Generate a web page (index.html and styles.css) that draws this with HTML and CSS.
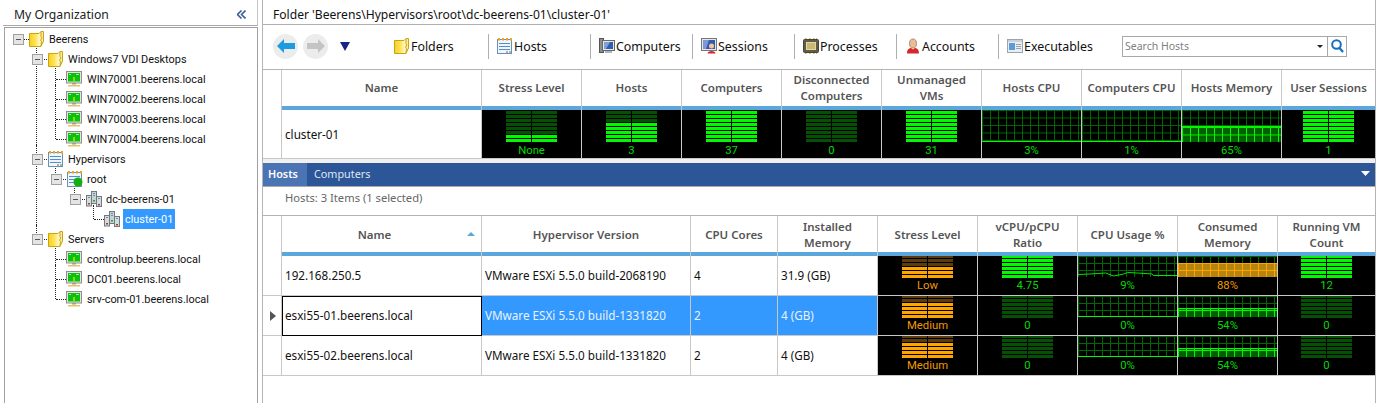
FILE: index.html
```html
<!DOCTYPE html>
<html lang="en">
<head>
    <meta charset="UTF-8">
    <title>My Organization</title>
    <link rel="stylesheet" href="styles.css">
</head>
<body>
    <svg class="sprites" xmlns="http://www.w3.org/2000/svg">
        <defs>
            <linearGradient id="gold" x1="0" y1="0" x2="1" y2="0">
                <stop offset="0" stop-color="#f9cf1e"/>
                <stop offset="0.45" stop-color="#ffe45e"/>
                <stop offset="0.7" stop-color="#fff6c4"/>
                <stop offset="1" stop-color="#ffe98a"/>
            </linearGradient>
            <symbol id="i-folder" viewBox="0 0 16 16">
                <path d="M.5 2.500h9.500l2-2h2.500v9.500l-2.500 5.500h-11.500z" fill="url(#gold)" stroke="#c9a412"/>
                <path d="M12 .5v5l1 1.500-1.500 2 1 1.500-.5 4.500" fill="none" stroke="#c9a412"/>
            </symbol>
            <symbol id="i-monitor" viewBox="0 0 16 16">
                <rect x="0.500" y="0.500" width="15" height="11.500" fill="#e4e4e4" stroke="#8f8f8f"/>
                <rect x="2" y="2" width="12" height="8.500" fill="#0cc00c"/>
                <path d="M3 3h2v1h-2zM10 3h3v1h-3z" fill="#a8e8c0"/>
                <path d="M7 6h2v4.500h-2z" fill="#7fe01a"/>
                <path d="M6 12h4v1.500h-4z" fill="#9c9c9c"/>
                <path d="M2 14h12v1.500h-12z" fill="#e6c45a"/>
            </symbol>
            <symbol id="i-hosts" viewBox="0 0 16 16">
                <rect x="0.500" y="1.500" width="14" height="14" fill="#eef6fc" stroke="#6f8fb0"/>
                <path d="M1 0h2v2.500h-2zM5 0h2v2.500h-2zM9 0h2v2.500h-2zM13 0h2v2.500h-2z" fill="#eea321"/>
                <path d="M2 5h11v1h-11zM2 8h11v1h-11zM2 11h11v1h-11z" fill="#4f8fd0"/>
                <path d="M9 13.500h2v1h-2z" fill="#e33"/>
                <path d="M12 13.500h2v1h-2z" fill="#2a2"/>
            </symbol>
            <symbol id="i-dc" viewBox="0 0 16 16">
                <rect x="0.500" y="4.500" width="5" height="10.500" fill="#d3dde0" stroke="#6d7a80"/>
                <rect x="5.500" y="0.500" width="5" height="12" fill="#c6d2d6" stroke="#6d7a80"/>
                <rect x="10.500" y="5.500" width="5" height="10" fill="#d3dde0" stroke="#6d7a80"/>
                <path d="M2 12h2v1.500h-2z" fill="#d22"/>
                <path d="M7 9h2v1.500h-2z" fill="#2a2"/>
                <path d="M12 13h2v1.500h-2z" fill="#d22"/>
                <path d="M7 2.500h2M7 4.500h2M2 6.500h2M12 7.500h2" stroke="#7d8a90"/>
            </symbol>
            <symbol id="i-computers" viewBox="0 0 16 16">
                <rect x="0.500" y="0.500" width="4" height="14" fill="#8e8e8e" stroke="#555"/>
                <rect x="3.500" y="2.500" width="12" height="10" fill="#e8e8e8" stroke="#666"/>
                <rect x="5" y="4" width="9" height="7" fill="#2e5db3"/>
                <path d="M5 4l6 0-4 7h-2z" fill="#7e9fd8"/>
                <path d="M6 13h7v2h-7z" fill="#b5b5b5"/>
            </symbol>
            <symbol id="i-sessions" viewBox="0 0 16 16">
                <rect x="0.500" y="0.500" width="15" height="12" fill="#e6e6e6" stroke="#777"/>
                <rect x="2" y="2" width="12" height="9" fill="#3558b0"/>
                <path d="M2 2h6l-3 9h-3z" fill="#7f97d6"/>
                <circle cx="10.500" cy="8" r="2.500" fill="#f0c8a0"/>
                <path d="M6.500 15.500c0-3.500 8-3.500 8 0z" fill="#d0282a"/>
            </symbol>
            <symbol id="i-processes" viewBox="0 0 16 16">
                <path d="M2 0h1.500v16h-1.500zM6 0h1.500v16h-1.500zM10 0h1.500v16h-1.500zM13 0h1v16h-1z" fill="#d9b21f"/>
                <rect x="0.500" y="1.500" width="15" height="13" rx="1" fill="#5c5c50" stroke="#444"/>
                <rect x="3.500" y="4.500" width="9" height="7" fill="#c9b978" stroke="#e8d890"/>
            </symbol>
            <symbol id="i-account" viewBox="0 0 16 16">
                <ellipse cx="8" cy="5.500" rx="3.500" ry="4.500" fill="#e9bd98" stroke="#b88a64"/>
                <path d="M2 15.500c0-5 3-5.500 4-5.500l2 1.500 2-1.500c1 0 4 .5 4 5.500z" fill="#d5282a"/>
            </symbol>
            <symbol id="i-exec" viewBox="0 0 16 16">
                <rect x="0.500" y="1.500" width="15" height="13" fill="#e8eef3" stroke="#9aa4ad"/>
                <path d="M1 2h14v2h-14z" fill="#c8d2da"/>
                <rect x="2" y="5" width="6" height="7" fill="#5b9bd8"/>
                <path d="M9 6h5v1h-5zM9 8h5v1h-5zM9 10h5v1h-5z" fill="#9aa4ad"/>
            </symbol>
        </defs>
    </svg>

    <div class="app">
        <aside class="sidebar">
            <div class="sidebar-title">
                <span>My Organization</span>
                <svg class="collapse" width="9" height="9" viewBox="0 0 9 9"><path d="M4.500 .5l-4 4 4 4M8.500 .5l-4 4 4 4" fill="none" stroke="#3a5f9f" stroke-width="1.600"/></svg>
            </div>
            <div class="tree-box">
                <ul class="tree">
                    <li>
                        <div class="node"><i class="toggle"></i><svg class="ico"><use href="#i-folder"/></svg><span>Beerens</span></div>
                        <ul>
                            <li>
                                <div class="node"><i class="toggle"></i><svg class="ico"><use href="#i-folder"/></svg><span>Windows7 VDI Desktops</span></div>
                                <ul>
                                    <li><div class="node"><svg class="ico leaf"><use href="#i-monitor"/></svg><span>WIN70001.beerens.local</span></div></li>
                                    <li><div class="node"><svg class="ico leaf"><use href="#i-monitor"/></svg><span>WIN70002.beerens.local</span></div></li>
                                    <li><div class="node"><svg class="ico leaf"><use href="#i-monitor"/></svg><span>WIN70003.beerens.local</span></div></li>
                                    <li><div class="node"><svg class="ico leaf"><use href="#i-monitor"/></svg><span>WIN70004.beerens.local</span></div></li>
                                </ul>
                            </li>
                            <li>
                                <div class="node"><i class="toggle"></i><svg class="ico"><use href="#i-hosts"/></svg><span>Hypervisors</span></div>
                                <ul>
                                    <li>
                                        <div class="node"><i class="toggle"></i><svg class="ico status"><use href="#i-hosts"/><circle cx="11" cy="11" r="4.500" fill="#10b010"/></svg><span>root</span></div>
                                        <ul>
                                            <li>
                                                <div class="node"><i class="toggle"></i><svg class="ico"><use href="#i-dc"/></svg><span>dc-beerens-01</span></div>
                                                <ul>
                                                    <li><div class="node"><svg class="ico leaf"><use href="#i-dc"/></svg><span class="selected">cluster-01</span></div></li>
                                                </ul>
                                            </li>
                                        </ul>
                                    </li>
                                </ul>
                            </li>
                            <li>
                                <div class="node"><i class="toggle"></i><svg class="ico"><use href="#i-folder"/></svg><span>Servers</span></div>
                                <ul>
                                    <li><div class="node"><svg class="ico leaf"><use href="#i-monitor"/></svg><span>controlup.beerens.local</span></div></li>
                                    <li><div class="node"><svg class="ico leaf"><use href="#i-monitor"/></svg><span>DC01.beerens.local</span></div></li>
                                    <li><div class="node"><svg class="ico leaf"><use href="#i-monitor"/></svg><span>srv-com-01.beerens.local</span></div></li>
                                </ul>
                            </li>
                        </ul>
                    </li>
                </ul>
            </div>
        </aside>

        <main class="main">
            <div class="path">Folder 'Beerens\Hypervisors\root\dc-beerens-01\cluster-01'</div>

            <div class="toolbar">
                <div class="nav">
                    <span class="nav-btn"><svg width="18" height="14" viewBox="0 0 18 14"><path d="M0 7l7-7v4h11v6h-11v4z" fill="#1c9be0"/></svg></span>
                    <span class="nav-btn"><svg width="18" height="14" viewBox="0 0 18 14"><path d="M18 7l-7-7v4h-11v6h11v4z" fill="#c4c4c4"/></svg></span>
                    <svg class="nav-menu" width="10" height="9" viewBox="0 0 10 9"><path d="M0 0h10l-5 9z" fill="#14228a"/></svg>
                </div>
                <a class="tool"><svg class="ico"><use href="#i-folder"/></svg>Folders</a>
                <a class="tool"><svg class="ico"><use href="#i-hosts"/></svg>Hosts</a>
                <a class="tool"><svg class="ico"><use href="#i-computers"/></svg>Computers</a>
                <a class="tool"><svg class="ico"><use href="#i-sessions"/></svg>Sessions</a>
                <a class="tool"><svg class="ico"><use href="#i-processes"/></svg>Processes</a>
                <a class="tool"><svg class="ico"><use href="#i-account"/></svg>Accounts</a>
                <a class="tool"><svg class="ico"><use href="#i-exec"/></svg>Executables</a>
                <div class="search">
                    <span class="search-input">Search Hosts</span>
                    <i class="search-caret"></i>
                    <span class="search-btn"><svg width="13" height="14" viewBox="0 0 13 14"><circle cx="5.500" cy="5.500" r="4.300" fill="none" stroke="#1470c0" stroke-width="2"/><path d="M8.500 9l3.500 4" stroke="#1470c0" stroke-width="2.200"/></svg></span>
                </div>
            </div>

            <table class="grid grid-top">
                <colgroup>
                    <col class="c-head"><col class="c-name">
                    <col class="c-100"><col class="c-100"><col class="c-100"><col class="c-100"><col class="c-100"><col class="c-100"><col class="c-100"><col class="c-100">
                    <col class="c-last-top">
                </colgroup>
                <thead>
                    <tr>
                        <th></th><th>Name</th><th>Stress Level</th><th>Hosts</th><th>Computers</th><th>Disconnected<br>Computers</th><th>Unmanaged<br>VMs</th><th>Hosts CPU</th><th>Computers CPU</th><th>Hosts Memory</th><th>User Sessions</th>
                    </tr>
                </thead>
                <tbody>
                    <tr>
                        <td></td>
                        <td class="text">cluster-01</td>
                        <td class="cell"><div class="gauge"><div class="meter"><div class="lit" style="height:8px"></div></div><span class="value">None</span></div></td>
                        <td class="cell"><div class="gauge"><div class="meter"><div class="lit" style="height:20px"></div></div><span class="value">3</span></div></td>
                        <td class="cell"><div class="gauge"><div class="meter"><div class="lit" style="height:32px"></div></div><span class="value">37</span></div></td>
                        <td class="cell"><div class="gauge"><div class="meter"></div><span class="value">0</span></div></td>
                        <td class="cell"><div class="gauge"><div class="meter"><div class="lit" style="height:32px"></div></div><span class="value">31</span></div></td>
                        <td class="cell"><div class="gauge"><div class="graph"><div class="fill" style="height:1px"></div></div><span class="value">3%</span></div></td>
                        <td class="cell"><div class="gauge"><div class="graph"><div class="fill" style="height:1px"></div></div><span class="value">1%</span></div></td>
                        <td class="cell"><div class="gauge"><div class="graph"><div class="fill" style="height:16px"></div></div><span class="value">65%</span></div></td>
                        <td class="cell"><div class="gauge"><div class="meter"><div class="lit" style="height:32px"></div></div><span class="value">1</span></div></td>
                    </tr>
                </tbody>
            </table>

            <div class="tabs">
                <span class="tab active">Hosts</span>
                <span class="tab">Computers</span>
                <svg class="tabs-menu" width="9" height="5" viewBox="0 0 9 5"><path d="M0 0h9l-4.500 5z" fill="#fff"/></svg>
            </div>

            <div class="count">Hosts: 3 Items (1 selected)</div>

            <table class="grid grid-hosts">
                <colgroup>
                    <col class="c-head"><col class="c-name"><col class="c-hyper"><col class="c-cores">
                    <col class="c-100"><col class="c-100"><col class="c-100"><col class="c-100"><col class="c-100">
                    <col class="c-last-hosts">
                </colgroup>
                <thead>
                    <tr>
                        <th></th><th class="sorted">Name</th><th>Hypervisor Version</th><th>CPU Cores</th><th>Installed<br>Memory</th><th>Stress Level</th><th>vCPU/pCPU<br>Ratio</th><th>CPU Usage %</th><th>Consumed<br>Memory</th><th>Running VM<br>Count</th>
                    </tr>
                </thead>
                <tbody>
                    <tr>
                        <td></td>
                        <td class="text">192.168.250.5</td>
                        <td class="text">VMware ESXi 5.5.0 build-2068190</td>
                        <td class="text">4</td>
                        <td class="text">31.9 (GB)</td>
                        <td class="cell"><div class="gauge warn"><div class="meter"><div class="lit" style="height:12px"></div></div><span class="value">Low</span></div></td>
                        <td class="cell"><div class="gauge"><div class="meter"><div class="lit" style="height:24px"></div></div><span class="value">4.75</span></div></td>
                        <td class="cell"><div class="gauge"><div class="graph"><svg class="trace" viewBox="0 0 100 21" preserveAspectRatio="none"><polyline points="0,18.500 12,18 20,17.500 28,17 36,20 46,18 50,16.500 60,17 75,18 76,19.500 100,19.500" fill="none" stroke="#00e800"/></svg></div><span class="value">9%</span></div></td>
                        <td class="cell"><div class="gauge warn"><div class="graph"><div class="fill" style="height:14px"></div></div><span class="value">88%</span></div></td>
                        <td class="cell"><div class="gauge"><div class="meter"><div class="lit" style="height:24px"></div></div><span class="value">12</span></div></td>
                    </tr>
                    <tr class="current">
                        <td><i class="row-arrow"></i></td>
                        <td class="text focus">esxi55-01.beerens.local</td>
                        <td class="text">VMware ESXi 5.5.0 build-1331820</td>
                        <td class="text">2</td>
                        <td class="text">4 (GB)</td>
                        <td class="cell"><div class="gauge warn"><div class="meter"><div class="lit" style="height:16px"></div></div><span class="value">Medium</span></div></td>
                        <td class="cell"><div class="gauge"><div class="meter"></div><span class="value">0</span></div></td>
                        <td class="cell"><div class="gauge"><div class="graph"><div class="fill" style="height:1px"></div></div><span class="value">0%</span></div></td>
                        <td class="cell"><div class="gauge"><div class="graph"><div class="fill" style="height:9px"></div></div><span class="value">54%</span></div></td>
                        <td class="cell"><div class="gauge"><div class="meter"></div><span class="value">0</span></div></td>
                    </tr>
                    <tr>
                        <td></td>
                        <td class="text">esxi55-02.beerens.local</td>
                        <td class="text">VMware ESXi 5.5.0 build-1331820</td>
                        <td class="text">2</td>
                        <td class="text">4 (GB)</td>
                        <td class="cell"><div class="gauge warn"><div class="meter"><div class="lit" style="height:16px"></div></div><span class="value">Medium</span></div></td>
                        <td class="cell"><div class="gauge"><div class="meter"></div><span class="value">0</span></div></td>
                        <td class="cell"><div class="gauge"><div class="graph"><div class="fill" style="height:1px"></div></div><span class="value">0%</span></div></td>
                        <td class="cell"><div class="gauge"><div class="graph"><div class="fill" style="height:9px"></div></div><span class="value">54%</span></div></td>
                        <td class="cell"><div class="gauge"><div class="meter"></div><span class="value">0</span></div></td>
                    </tr>
                </tbody>
            </table>
        </main>
    </div>
</body>
</html>
```

FILE: styles.css
```css
* {
    margin: 0;
    padding: 0;
    box-sizing: border-box;
}

html, body {
    height: 100%;
    overflow: hidden;
}

body {
    font-family: "Noto Sans", "Open Sans", sans-serif;
    font-size: 11.7px;
    color: #111;
    background: #fff;
}

.sprites {
    position: absolute;
    width: 0;
    height: 0;
}

.app {
    display: flex;
    width: 1376px;
    height: 403px;
}

.ico {
    width: 16px;
    height: 16px;
    flex: none;
}

/* sidebar */
.sidebar {
    width: 262px;
    flex: none;
    padding-left: 4px;
    padding-right: 4px;
    display: flex;
    flex-direction: column;
}

.sidebar-title {
    height: 26px;
    margin-left: -1px;
    padding: 3px 11px 0 11px;
    border-bottom: 1px solid #a8a8a8;
    border-right: 1px solid #c4c4c4;
    display: flex;
    align-items: center;
    justify-content: space-between;
    font-size: 12.2px;
    color: #222;
}

.tree-box {
    flex: 1;
    margin-top: 1px;
    padding: 1px 0 0 8px;
    border: 1px solid #a0a0a0;
    border-bottom: none;
    font-family: Roboto, "Noto Sans", sans-serif;
    font-size: 10.9px;
}

.tree, .tree ul {
    list-style: none;
}

.tree ul {
    margin-left: 19px;
}

.tree li {
    position: relative;
}

.tree ul > li::before {
    content: "";
    position: absolute;
    left: 4px;
    top: -4px;
    bottom: 0;
    border-left: 1px dotted #222;
}

.tree ul > li:last-child::before {
    bottom: auto;
    height: 14px;
}

.tree ul > li::after {
    content: "";
    position: absolute;
    left: 5px;
    top: 10px;
    width: 10px;
    border-top: 1px dotted #222;
}

.tree > li > .node::before {
    content: "";
    position: absolute;
    left: 11px;
    top: 10px;
    width: 5px;
    border-top: 1px dotted #222;
}

.node {
    height: 20px;
    display: flex;
    align-items: center;
    position: relative;
    z-index: 1;
}

.node > span {
    height: 20px;
    margin-left: 2px;
    padding: 0 2px;
    line-height: 22px;
}

.leaf + span {
    margin-left: 3px;
}

.toggle {
    width: 11px;
    height: 11px;
    margin-right: 5px;
    flex: none;
    border: 1px solid #a0a0a0;
    background: linear-gradient(#555, #555) center / 5px 1px no-repeat, #e4e4e4;
}

.leaf {
    margin-left: 15px;
}

.status {
    overflow: visible;
}

.selected {
    background: #3399ff;
    color: #fff;
}

/* main panel */
.main {
    width: 1114px;
    flex: none;
    border-left: 1px solid #b4b4b4;
    border-right: 1px solid #b4b4b4;
    display: flex;
    flex-direction: column;
}

.path {
    height: 25px;
    padding: 0 0 0 10px;
    line-height: 29px;
    font-size: 12.1px;
    border-bottom: 1px solid #b0b0b0;
}

.toolbar {
    height: 44px;
    padding-bottom: 2px;
    display: flex;
    align-items: center;
    font-size: 12.4px;
}

.nav {
    width: 123px;
    padding-left: 10px;
    display: flex;
    align-items: center;
    gap: 5px;
    flex: none;
}

.nav-btn {
    width: 25px;
    height: 25px;
    border-radius: 50%;
    background: #ececec;
    display: flex;
    align-items: center;
    justify-content: center;
}

.nav-menu {
    margin-left: 7px;
}

.tool {
    width: 102px;
    height: 25px;
    padding-left: 8px;
    display: flex;
    align-items: center;
    gap: 1px;
    flex: none;
    border-left: 1px solid #b0b0b0;
}

.tool:first-of-type {
    border-left: none;
    padding-left: 8px;
}

.search {
    width: 225px;
    height: 21px;
    margin-left: 22px;
    border: 1px solid #a8a8a8;
    display: flex;
    align-items: center;
    font-size: 10.5px;
    color: #808080;
    position: relative;
}

.search-input {
    flex: 1;
    padding-left: 2px;
}

.search-caret {
    width: 0;
    height: 0;
    margin-right: 4px;
    border-left: 3px solid transparent;
    border-right: 3px solid transparent;
    border-top: 3px solid #222;
}

.search-btn {
    width: 19px;
    height: 100%;
    border-left: 1px solid #a8a8a8;
    display: flex;
    align-items: center;
    justify-content: center;
}

/* grids */
.grid {
    table-layout: fixed;
    width: 1112px;
    border-collapse: separate;
    border-spacing: 0;
    border-top: 1px solid #b4b4b4;
}

.c-head { width: 19px; }
.c-name { width: 200px; }
.c-100 { width: 100px; }
.c-last-top { width: 93px; }
.c-hyper { width: 209px; }
.c-cores { width: 87px; }
.c-last-hosts { width: 97px; }

.grid th {
    font-weight: 600;
    font-size: 11.5px;
    line-height: 16px;
    color: #555;
    text-align: center;
    vertical-align: middle;
    padding-bottom: 4px;
    border-right: 1px solid #c8c8c8;
    background: linear-gradient(#5ba7db, #5ba7db) left bottom / 100% 4px no-repeat;
}

.grid th:first-child, .grid td:first-child {
    background: #fff;
}

.grid th:last-child, .grid td:last-child {
    border-right: none;
}

.grid td {
    padding: 0;
    border-right: 1px solid #c8c8c8;
    border-bottom: 1px solid #c8c8c8;
    vertical-align: middle;
}

.grid-top th {
    height: 40px;
}

.grid-top td {
    height: 49px;
}

.grid-hosts th {
    height: 40px;
    padding-top: 2px;
}

.grid-hosts td {
    height: 40px;
}

.grid td.text {
    padding-left: 3px;
    white-space: nowrap;
}

.grid-hosts td.text {
    padding-bottom: 2px;
}

.sorted {
    position: relative;
    padding-right: 14px;
}

.sorted::after {
    content: "";
    position: absolute;
    right: 6px;
    top: 16px;
    border-left: 4px solid transparent;
    border-right: 4px solid transparent;
    border-bottom: 4px solid #5ba7db;
}

.current .text {
    background: #3399ff;
    color: #e8f2ff;
}

.grid td.focus {
    background: #fff;
    color: #111;
    outline: 1px solid #000;
    outline-offset: -1px;
}

.row-arrow {
    display: block;
    width: 0;
    height: 0;
    margin-left: 7px;
    border-top: 5px solid transparent;
    border-bottom: 5px solid transparent;
    border-left: 6px solid #555;
}

.tabs {
    height: 28px;
    flex: none;
    border-top: 4px solid #f0f0f0;
    background: #2c5697;
    border-bottom: 1px solid #a9a9a9;
    display: flex;
    align-items: stretch;
    color: #dfe8f5;
    font-size: 10.8px;
    position: relative;
}

.tab {
    padding-left: 7px;
    line-height: 22px;
}

.tab.active {
    width: 44px;
    padding-left: 5px;
    background: #4a74b4;
    color: #fff;
    font-weight: 600;
}

.tabs-menu {
    position: absolute;
    right: 5px;
    top: 8px;
}

.count {
    height: 28px;
    flex: none;
    padding-left: 22px;
    line-height: 22px;
    color: #666;
    font-size: 11.2px;
}

/* black cells */
.cell {
    background: #000;
    height: 100%;
}

.gauge {
    height: 100%;
    display: flex;
    flex-direction: column;
    align-items: center;
    --on: #00f800;
    --dim: #065006;
    --line: #006800;
    --area: #006000;
    --text: #00dc00;
}

.grid-top .gauge {
    height: 48px;
}

.grid-hosts .gauge {
    height: 39px;
}

.gauge.warn {
    --on: #ffa500;
    --dim: #5a3c10;
    --area: #b88410;
    --text: #f09a00;
}

.value {
    margin-top: auto;
    line-height: 15px;
    color: var(--text);
    font-family: Roboto, "Noto Sans", sans-serif;
    font-size: 11.3px;
}

.grid-hosts .value {
    line-height: 16px;
    margin-bottom: 1px;
}

.meter {
    width: 51px;
    height: 31px;
    flex: none;
    margin-top: 1px;
    display: flex;
    flex-direction: column;
    justify-content: flex-end;
    overflow: hidden;
    background:
        linear-gradient(#000, #000) center / 1px 100% no-repeat,
        repeating-linear-gradient(to top, var(--dim) 0 3px, #000 3px 4px);
}

.grid-hosts .meter {
    height: 22px;
    margin-top: 0;
}

.lit {
    flex: none;
    background:
        linear-gradient(#000, #000) center / 1px 100% no-repeat,
        repeating-linear-gradient(to top, var(--on) 0 3px, #000 3px 4px);
}

.graph {
    width: 100%;
    height: 32px;
    flex: none;
    display: flex;
    flex-direction: column;
    justify-content: flex-end;
    position: relative;
    --pitch: 7.5px;
    background:
        linear-gradient(var(--line) 1px, transparent 1px) 0 0 / 100% var(--pitch),
        linear-gradient(90deg, var(--line) 1px, transparent 1px) 0 0 / 8px 100%;
}

.grid-hosts .graph {
    height: 21px;
    --pitch: 7px;
}

.fill {
    flex: none;
    border-top: 1px solid var(--on);
    background:
        linear-gradient(var(--on) 1px, transparent 1px) 0 100% / 100% var(--pitch),
        linear-gradient(90deg, var(--on) 1px, transparent 1px) 0 0 / 8px 100%,
        var(--area);
}

.trace {
    position: absolute;
    left: 0;
    top: 0;
    width: 100%;
    height: 100%;
}
```
